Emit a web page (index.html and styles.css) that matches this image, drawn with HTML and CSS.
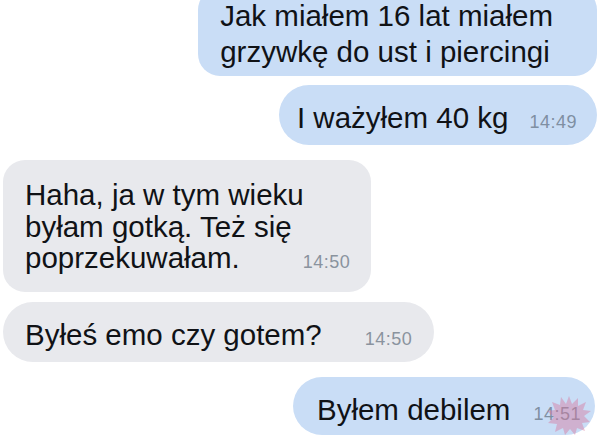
FILE: index.html
```html
<!DOCTYPE html>
<html lang="pl">
<head>
<meta charset="utf-8">
<title>Czat</title>
<link rel="stylesheet" href="styles.css">
</head>
<body>
<div class="chat">
  <div class="bubble out first">Jak miałem 16 lat miałem<br>grzywkę do ust i piercingi</div>
  <div class="bubble out second">I ważyłem 40 kg<span class="time t1">14:49</span></div>
  <div class="bubble in third">Haha, ja w tym wieku<br>byłam gotką. Też się<br>poprzekuwałam.<span class="time t2">14:50</span></div>
  <div class="bubble in fourth">Byłeś emo czy gotem?<span class="time t3">14:50</span></div>
  <div class="bubble out fifth">Byłem debilem<span class="time t4">14:51</span>
    <svg class="mark" viewBox="0 0 44 40" width="44" height="40" aria-hidden="true">
      <polygon points="22,1 25,9 31,3 31,11 39,7 36,15 44,16 37,21 43,27 35,28 38,36 30,33 28,40 23,34 18,40 16,33 8,37 10,29 1,28 7,22 0,16 8,15 5,7 13,10 14,2 19,9" fill="#d77aa0" fill-opacity="0.45"/>
    </svg>
  </div>
</div>
</body>
</html>
```
FILE: styles.css
```css
html, body {
  margin: 0;
  padding: 0;
  background: #ffffff;
}

body {
  width: 600px;
  height: 439px;
  overflow: hidden;
  font-family: "Liberation Sans", Arial, sans-serif;
  color: #101216;
}

.chat {
  display: flex;
  flex-direction: column;
  padding: 0 3px;
}

.bubble {
  position: relative;
  font-size: 29.5px;
  line-height: 32px;
  white-space: nowrap;
  border-radius: 30px;
}

.out {
  align-self: flex-end;
  background: #c9ddf6;
}

.in {
  align-self: flex-start;
  background: #e8e9ed;
}

.time {
  font-size: 18px;
  line-height: 1;
  letter-spacing: 0.5px;
  color: #8a939e;
}

.out .time {
  color: #7f8fa2;
}

.first {
  margin-top: -12px;
  padding: 10px 44px 6px 22px;
  line-height: 36px;
  border-radius: 22px;
}

.second {
  margin-top: 9px;
  padding: 17px 20px 11px 18px;
}

.t1 {
  margin-left: 21px;
}

.third {
  margin-top: 15px;
  padding: 19px 21px 18.5px 22px;
  line-height: 31.5px;
  border-radius: 22px;
}

.t2 {
  margin-left: 63px;
}

.fourth {
  margin-top: 10px;
  padding: 17px 22px 11px 22px;
}

.t3 {
  margin-left: 43px;
}

.fifth {
  margin-top: 15px;
  margin-right: 2px;
  padding: 17px 14px 9px 24px;
}

.t4 {
  margin-left: 23px;
}

.mark {
  position: absolute;
  right: 4px;
  top: 18px;
}
```
